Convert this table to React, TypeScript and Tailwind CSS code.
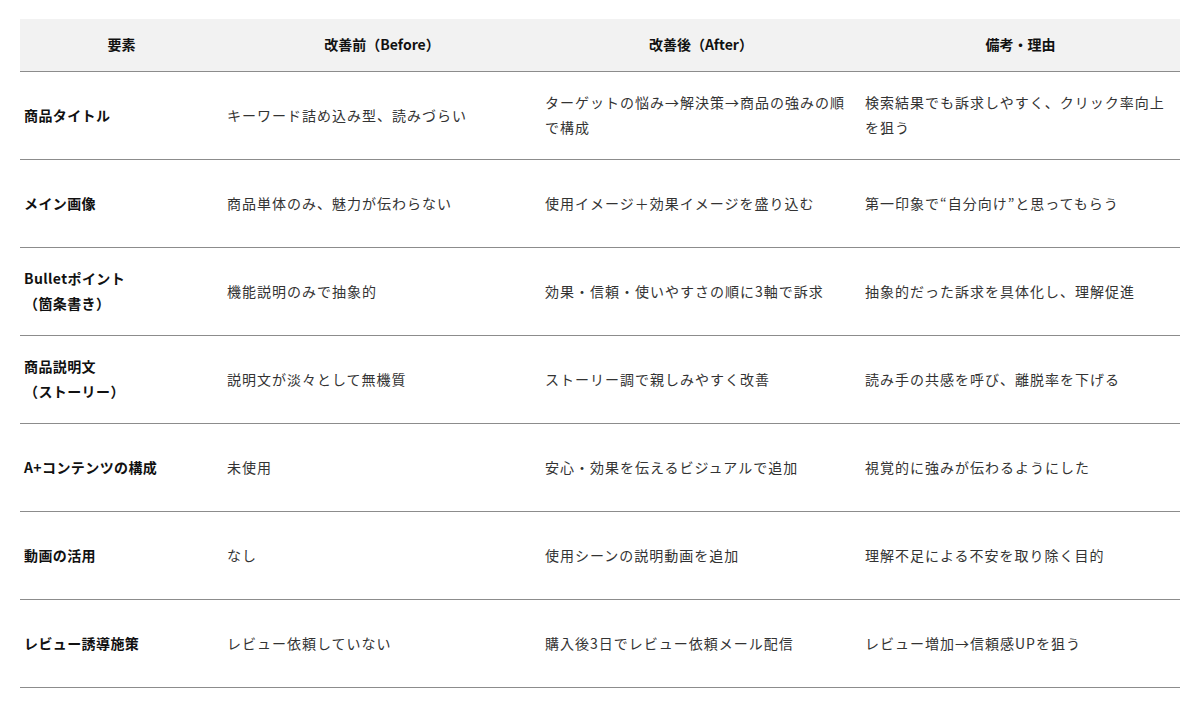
import React from "react";

const rows: [string[], string, string, string][] = [
  [["商品タイトル"], "キーワード詰め込み型、読みづらい", "ターゲットの悩み→解決策→商品の強みの順で構成", "検索結果でも訴求しやすく、クリック率向上を狙う"],
  [["メイン画像"], "商品単体のみ、魅力が伝わらない", "使用イメージ＋効果イメージを盛り込む", "第一印象で“自分向け”と思ってもらう"],
  [["Bulletポイント", "（箇条書き）"], "機能説明のみで抽象的", "効果・信頼・使いやすさの順に3軸で訴求", "抽象的だった訴求を具体化し、理解促進"],
  [["商品説明文", "（ストーリー）"], "説明文が淡々として無機質", "ストーリー調で親しみやすく改善", "読み手の共感を呼び、離脱率を下げる"],
  [["A+コンテンツの構成"], "未使用", "安心・効果を伝えるビジュアルで追加", "視覚的に強みが伝わるようにした"],
  [["動画の活用"], "なし", "使用シーンの説明動画を追加", "理解不足による不安を取り除く目的"],
  [["レビュー誘導施策"], "レビュー依頼していない", "購入後3日でレビュー依頼メール配信", "レビュー増加→信頼感UPを狙う"],
];

export default function App() {
  return (
    <div
      className="w-[1200px] h-[706px] bg-white px-[20px] pt-[19px]"
      style={{ fontFamily: '"Noto Sans CJK JP", "Noto Sans", sans-serif' }}
    >
      <table className="w-[1160px] border-collapse table-fixed text-[14px]">
        <colgroup>
          <col className="w-[203px]" />
          <col className="w-[318px]" />
          <col className="w-[320px]" />
          <col className="w-[319px]" />
        </colgroup>
        <thead>
          <tr className="bg-[#f2f2f2] h-[52px] border-b border-[#8c8c8c]">
            {["要素", "改善前（Before）", "改善後（After）", "備考・理由"].map((h) => (
              <th key={h} className="text-center font-bold text-[#111] px-1 align-middle leading-[25px]">
                {h}
              </th>
            ))}
          </tr>
        </thead>
        <tbody>
          {rows.map(([a, b, c, d], i) => (
            <tr key={i} className="h-[88px] border-b border-[#8c8c8c]">
              <td className="px-1 align-middle font-bold text-[#111] leading-[25px] tracking-[0.4px]">
                {a.map((l) => (
                  <div key={l}>{l}</div>
                ))}
              </td>
              <td className="px-1 align-middle text-[#333] leading-[25px] tracking-[1px]">{b}</td>
              <td className="px-1 align-middle text-[#333] leading-[25px] tracking-[1px]">{c}</td>
              <td className="px-1 align-middle text-[#333] leading-[25px] tracking-[1px]">{d}</td>
            </tr>
          ))}
        </tbody>
      </table>
    </div>
  );
}
